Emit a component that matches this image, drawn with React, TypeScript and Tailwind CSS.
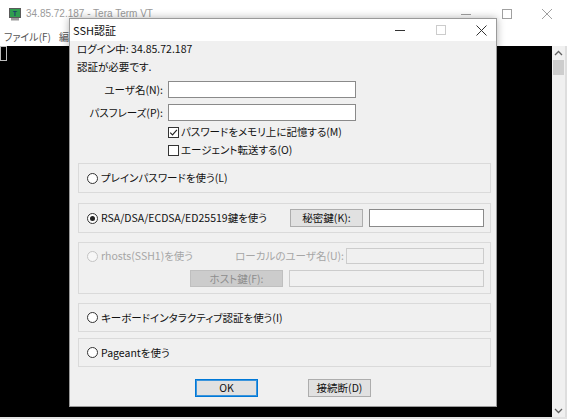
import React from "react";

function Radio({ checked = false, disabled = false }: { checked?: boolean; disabled?: boolean }) {
  return (
    <span
      className={`w-[11px] h-[11px] rounded-full border flex items-center justify-center shrink-0 ${
        disabled ? "border-[#c4c4c4] bg-[#f7f7f7]" : "border-[#333333] bg-white"
      }`}
    >
      {checked && <span className="w-[5px] h-[5px] rounded-full bg-[#222222]" />}
    </span>
  );
}

function Checkbox({ checked = false }: { checked?: boolean }) {
  return (
    <span className="w-[11px] h-[11px] border border-[#333333] bg-white flex items-center justify-center shrink-0">
      {checked && (
        <svg width="9" height="9" viewBox="0 0 9 9">
          <path d="M1.2 4.6 L3.5 6.9 L7.9 1.8" fill="none" stroke="#222" strokeWidth="1.1" />
        </svg>
      )}
    </span>
  );
}

function TeraIcon() {
  return (
    <svg width="12" height="13" viewBox="0 0 12 13">
      <rect x="0.5" y="0.5" width="11" height="9" fill="#2f9e4f" stroke="#5a5a5a" />
      <text x="6" y="8" textAnchor="middle" fontSize="7" fontFamily="Liberation Sans, sans-serif" fontWeight="bold" fill="#1a3d6b">
        T
      </text>
      <rect x="2" y="10" width="8" height="2.5" fill="#9a9a9a" />
    </svg>
  );
}

export default function App() {
  return (
    <div className="relative w-[567px] h-[419px] overflow-hidden bg-white font-['Noto_Sans_CJK_JP',sans-serif] [font-feature-settings:'palt'] text-[10.5px] leading-[12px] text-[#111]">
      {/* Tera Term main window */}
      <div className="flex flex-col w-full h-full">
        <div className="h-[28px] flex items-center bg-white">
          <div className="ml-[9px] mt-[1px]">
            <TeraIcon />
          </div>
          <span className="ml-[5px] text-[10px] text-[#9a9a9a] font-['Liberation_Sans',sans-serif]">34.85.72.187 - Tera Term VT</span>
          <div className="ml-auto flex h-full">
            <div className="w-[41px] flex items-center justify-center">
              <span className="w-[10px] h-px bg-[#a0a0a0]" />
            </div>
            <div className="w-[41px] flex items-center justify-center">
              <span className="w-[10px] h-[10px] border border-[#a0a0a0]" />
            </div>
            <div className="w-[40px] flex items-center justify-center">
              <svg width="12" height="12" viewBox="0 0 12 12">
                <path d="M1 1 L11 11 M11 1 L1 11" stroke="#a0a0a0" strokeWidth="1" />
              </svg>
            </div>
          </div>
        </div>
        <div className="h-[18px] flex items-center pl-[4px] gap-[8px] bg-white text-[10px] text-[#555]">
          <span>ファイル(F)</span>
          <span>編</span>
        </div>
        <div className="flex-1 flex">
          <div className="flex-1 bg-black">
            <div className="w-[7px] h-[15px] border border-[#bdbdbd]" />
          </div>
          <div className="w-[15px] bg-[#f0f0f0] border-r-2 border-[#dedede] flex flex-col items-center">
            <svg className="mt-[4px]" width="9" height="6" viewBox="0 0 9 6">
              <path d="M1 5 L4.5 1.5 L8 5" fill="none" stroke="#606060" strokeWidth="1.3" />
            </svg>
            <div className="mt-[4px] w-[11px] h-[15px] bg-[#cdcdcd]" />
            <svg className="mt-auto mb-[3px]" width="9" height="6" viewBox="0 0 9 6">
              <path d="M1 1 L4.5 4.5 L8 1" fill="none" stroke="#606060" strokeWidth="1.3" />
            </svg>
          </div>
        </div>
        <div className="h-[2px] bg-[#e4e4e4]" />
      </div>

      {/* SSH dialog */}
      <div className="absolute left-[69px] top-[18px] w-[428px] h-[389px] border border-[#9a9a9a] bg-[#f0f0f0] flex flex-col shadow-[0_0_8px_rgba(0,0,0,0.3)]">
        <div className="h-[22px] bg-white flex items-center shrink-0">
          <span className="ml-[3px] text-[11px] leading-[14px]">SSH認証</span>
          <div className="ml-auto flex h-full">
            <div className="w-[32px] flex items-center justify-center">
              <span className="w-[10px] h-px bg-[#333]" />
            </div>
            <div className="w-[50px] flex items-center justify-center">
              <span className="w-[10px] h-[10px] border border-[#cccccc]" />
            </div>
            <div className="w-[30px] flex items-center justify-center">
              <svg width="11" height="11" viewBox="0 0 11 11">
                <path d="M0.5 0.5 L10.5 10.5 M10.5 0.5 L0.5 10.5" stroke="#333" strokeWidth="1" />
              </svg>
            </div>
          </div>
        </div>

        <div className="flex flex-col flex-1">
          <div className="pl-[7px] mt-[1px] h-[13px] flex items-center">ログイン中: 34.85.72.187</div>
          <div className="pl-[7px] mt-[5px] h-[14px] flex items-center">認証が必要です.</div>

          <div className="mt-[7px] h-[17px] flex items-center">
            <span className="w-[95px] text-right pr-[2px]">ユーザ名(N):</span>
            <span className="ml-[3px] w-[188px] h-[17px] bg-white border border-[#8a8a8a]" />
          </div>
          <div className="mt-[6px] h-[17px] flex items-center">
            <span className="w-[95px] text-right pr-[2px]">パスフレーズ(P):</span>
            <span className="ml-[3px] w-[188px] h-[17px] bg-white border border-[#8a8a8a]" />
          </div>
          <div className="mt-[4px] h-[14px] flex items-center pl-[98px] gap-[2px]">
            <Checkbox checked />
            <span>パスワードをメモリ上に記憶する(M)</span>
          </div>
          <div className="mt-[4px] h-[14px] flex items-center pl-[98px] gap-[2px]">
            <Checkbox />
            <span>エージェント転送する(O)</span>
          </div>

          <div className="pl-[8px] pr-[5px] flex flex-col">
            <div className="mt-[6px] h-[30px] border border-[#dadada] flex items-center pl-[8px] gap-[3px]">
              <Radio />
              <span>プレインパスワードを使う(L)</span>
            </div>

            <div className="mt-[10px] h-[30px] border border-[#dadada] flex items-center pl-[8px] pr-[6px]">
              <Radio checked />
              <span className="ml-[3px]">RSA/DSA/ECDSA/ED25519鍵を使う</span>
              <span className="ml-auto w-[73px] h-[18px] bg-[#e1e1e1] border border-[#adadad] flex items-center justify-center">
                秘密鍵(K):
              </span>
              <span className="ml-[6px] w-[115px] h-[18px] bg-white border border-[#8a8a8a]" />
            </div>

            <div className="mt-[9px] h-[52px] border border-[#dadada] flex flex-col pl-[8px] pr-[6px]">
              <div className="mt-[5px] h-[16px] flex items-center text-[#a6a6a6]">
                <Radio disabled />
                <span className="ml-[3px]">rhosts(SSH1)を使う</span>
                <span className="ml-auto">ローカルのユーザ名(U):</span>
                <span className="ml-[2px] w-[138px] h-[16px] bg-[#f0f0f0] border border-[#cccccc]" />
              </div>
              <div className="mt-[6px] h-[17px] flex items-center justify-end">
                <span className="w-[93px] h-[17px] bg-[#cccccc] border border-[#bfbfbf] text-[#8e8e8e] flex items-center justify-center">
                  ホスト鍵(F):
                </span>
                <span className="ml-[6px] w-[195px] h-[17px] bg-[#f0f0f0] border border-[#cccccc]" />
              </div>
            </div>

            <div className="mt-[9px] h-[29px] border border-[#dadada] flex items-center pl-[8px] gap-[3px]">
              <Radio />
              <span>キーボードインタラクティブ認証を使う(I)</span>
            </div>

            <div className="mt-[6px] h-[29px] border border-[#dadada] flex items-center pl-[8px] gap-[3px]">
              <Radio />
              <span>Pageantを使う</span>
            </div>
          </div>

          <div className="mt-[12px] flex">
            <span className="ml-[125px] w-[63px] h-[18px] bg-[#e1e1e1] border border-[#0078d7] shadow-[inset_0_0_0_1px_#3c95dc] flex items-center justify-center">
              OK
            </span>
            <span className="ml-[50px] w-[63px] h-[18px] bg-[#e1e1e1] border border-[#adadad] flex items-center justify-center">
              接続断(D)
            </span>
          </div>
        </div>
      </div>
    </div>
  );
}
